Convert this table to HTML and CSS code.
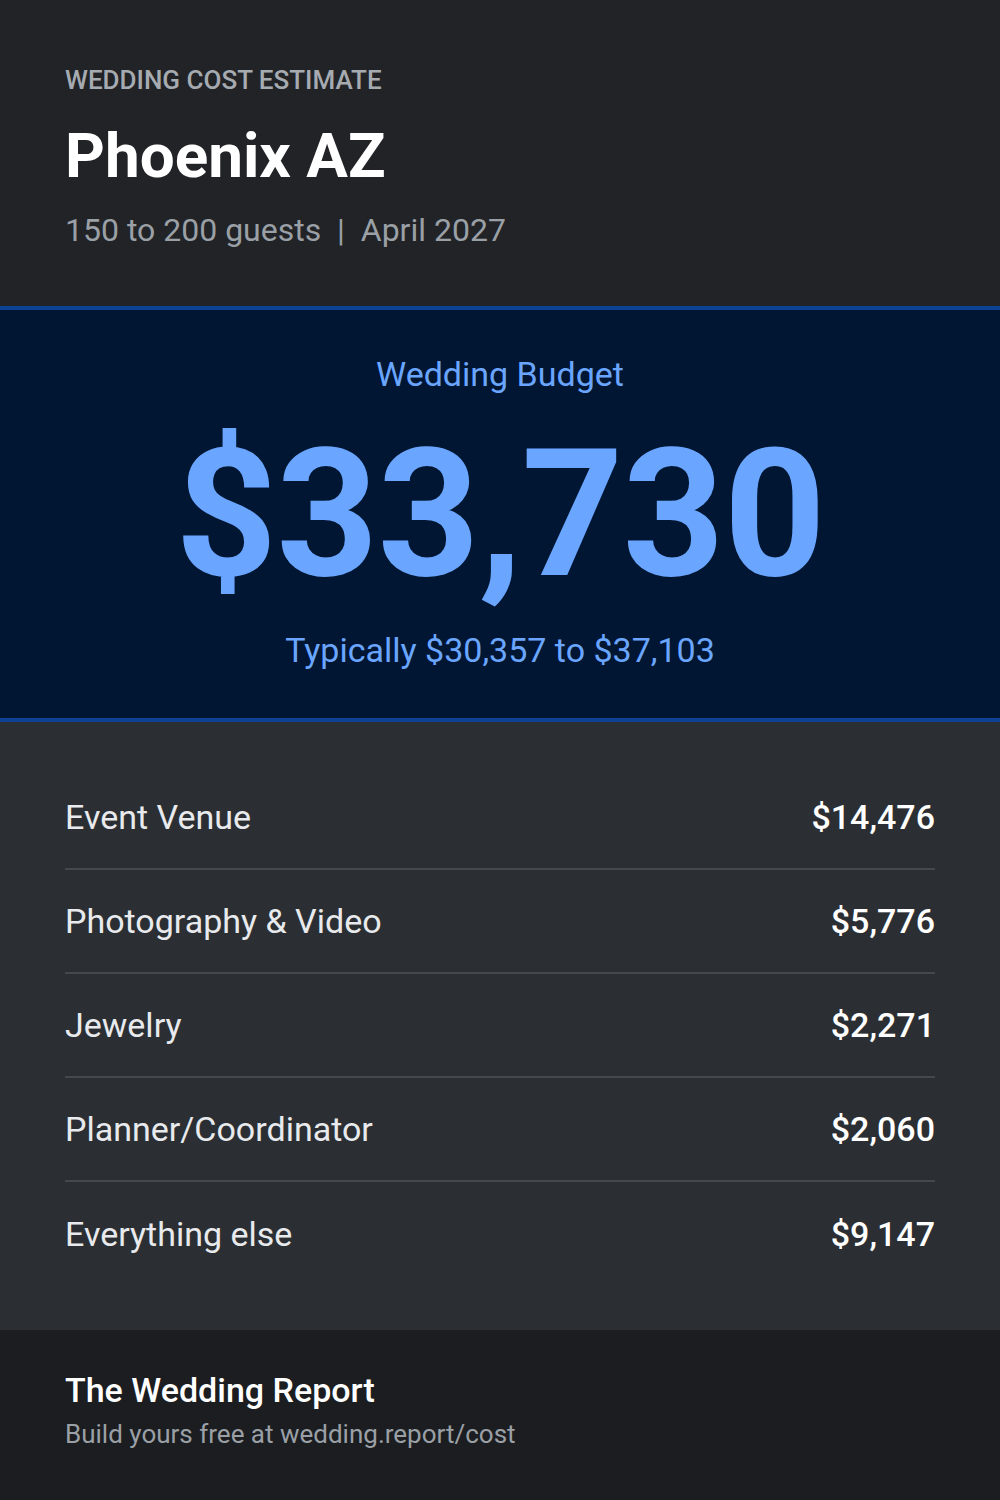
FILE: index.html
```html
<!DOCTYPE html>
<html lang="en">
<head>
  <meta charset="UTF-8">
  <meta name="viewport" content="width=device-width, initial-scale=1.0">
  <title>Wedding Cost Estimate – Phoenix AZ</title>
  <link rel="stylesheet" href="styles.css">
</head>
<body>
  <header class="intro">
    <p class="eyebrow">WEDDING COST ESTIMATE</p>
    <h1 class="city">Phoenix AZ</h1>
    <p class="meta">150 to 200 guests &nbsp;|&nbsp; April 2027</p>
  </header>

  <section class="budget">
    <p class="budget-label">Wedding Budget</p>
    <p class="budget-total">$33,730</p>
    <p class="budget-range">Typically $30,357 to $37,103</p>
  </section>

  <section class="breakdown">
    <div class="row"><span class="item">Event Venue</span><span class="cost">$14,476</span></div>
    <div class="row"><span class="item">Photography &amp; Video</span><span class="cost">$5,776</span></div>
    <div class="row"><span class="item">Jewelry</span><span class="cost">$2,271</span></div>
    <div class="row"><span class="item">Planner/Coordinator</span><span class="cost">$2,060</span></div>
    <div class="row"><span class="item">Everything else</span><span class="cost">$9,147</span></div>
  </section>

  <footer class="brand">
    <p class="brand-name">The Wedding Report</p>
    <p class="brand-link">Build yours free at wedding.report/cost</p>
  </footer>
</body>
</html>
```

FILE: styles.css
```css
body { margin: 0; font-family: Roboto, "Liberation Sans", sans-serif; background-color: #1b1d20; color: #e8eaed; }
p, h1 { margin: 0; }

.intro { background-color: #212327; padding: 62px 65px 0; height: 244px; }
.eyebrow { font-size: 26px; font-weight: 500; color: #a6abb1; line-height: 36px; }
.city { font-size: 62px; font-weight: 700; color: #ffffff; line-height: 76px; margin-top: 20px; }
.meta { font-size: 32px; color: #9aa0a6; line-height: 40px; margin-top: 16px; }

.budget { background-color: #011633; border-top: 4px solid #0d4193; border-bottom: 4px solid #0d4193; height: 408px; text-align: center; color: #6aa6ff; }
.budget-label { font-size: 34px; padding-top: 44px; line-height: 40px; }
.budget-total { font-size: 178px; font-weight: 700; line-height: 200px; margin-top: 20px; letter-spacing: -1px; }
.budget-range { font-size: 34px; line-height: 40px; margin-top: 16px; }

.breakdown { background-color: #2b2f33; padding: 44px 65px; }
.row { display: flex; justify-content: space-between; align-items: center; height: 102px; border-bottom: 2px solid #45494f; font-size: 34px; }
.row:last-child { border-bottom: none; height: 104px; }
.item { color: #e8eaed; }
.cost { color: #ffffff; font-weight: 500; }

.brand { background-color: #1b1d20; padding: 40px 65px 0; height: 130px; }
.brand-name { font-size: 34px; font-weight: 500; color: #ffffff; line-height: 40px; }
.brand-link { font-size: 26px; color: #9aa0a6; line-height: 32px; margin-top: 8px; }
```
